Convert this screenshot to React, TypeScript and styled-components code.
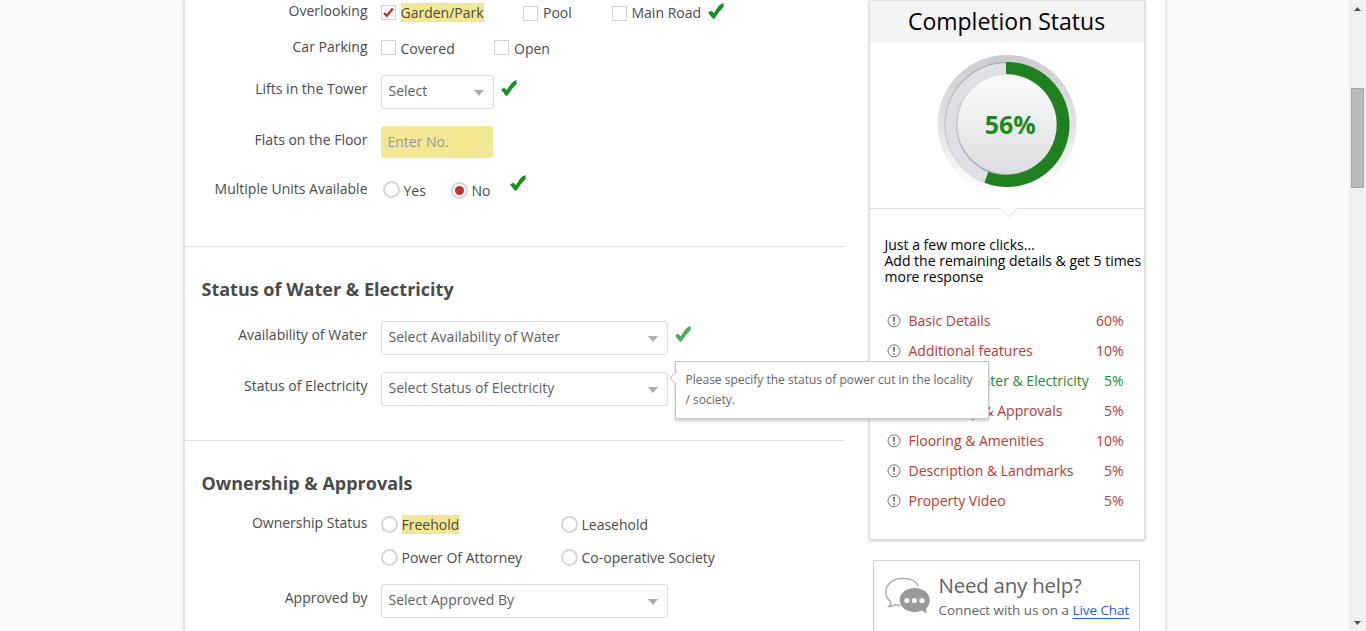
import React from 'react';
import styled, { createGlobalStyle } from 'styled-components';

const GlobalStyle = createGlobalStyle`
  * { box-sizing: border-box; }
  body {
    margin: 0;
    background: #fafafa;
    color: #4b4b4b;
    font: 14px/19px 'Open Sans', 'Noto Sans', sans-serif;
    overflow: hidden;
  }
`;

const Page = styled.div`
  display: flex;
  height: 631px;
  overflow: hidden;
`;

const Viewport = styled.div`
  flex: 1;
  display: flex;
  padding-left: 185px;
`;

const Sheet = styled.main`
  display: flex;
  width: 980px;
  height: 631px;
  background: #fff;
  box-shadow: 0 0 0 2px #e6e6e6, 0 0 4px 1px #e4e4e4;
`;

const Form = styled.div`
  width: 660px;
  flex: none;
`;

const Section = styled.section<{ $first?: boolean; $height: number }>`
  height: ${p => p.$height}px;
  padding-top: ${p => (p.$first ? 0 : 30)}px;
  border-top: ${p => (p.$first ? 'none' : '1px solid #e3e3e3')};
`;

const Heading = styled.h2<{ $gap: number }>`
  margin: 0 0 ${p => p.$gap}px;
  padding-left: 16.5px;
  font-size: 18px;
  line-height: 25px;
  font-weight: 700;
`;

const Row = styled.div<{ $height?: number }>`
  display: flex;
  gap: 13.5px;
  height: ${p => p.$height ?? 51}px;
`;

const Label = styled.div<{ $top?: number }>`
  width: 182.5px;
  flex: none;
  padding-top: ${p => p.$top ?? 4}px;
  text-align: right;
  white-space: nowrap;
`;

const Field = styled.div<{ $top?: number }>`
  position: relative;
  display: flex;
  align-items: flex-start;
  padding-top: ${p => p.$top ?? 0}px;
`;

const Choices = styled.div`
  display: grid;
  grid-template-columns: 180px 180px;
  row-gap: 14px;
`;

const Option = styled.label<{ $width?: number; $gap?: number; $indent?: number }>`
  display: flex;
  align-items: flex-start;
  gap: ${p => p.$gap ?? 5}px;
  width: ${p => (p.$width ? `${p.$width}px` : 'auto')};
  padding-left: ${p => p.$indent ?? 0}px;
  white-space: nowrap;
`;

const OptionText = styled.span<{ $marked?: boolean }>`
  background: ${p => (p.$marked ? '#f2e793' : 'transparent')};
`;

const Box = styled.span<{ $top?: number }>`
  display: flex;
  width: 15px;
  height: 15px;
  margin-top: ${p => p.$top ?? 1}px;
  border: 1px solid #d3d3d3;
  background: #fff;
`;

const Radio = styled.span<{ $top?: number }>`
  display: flex;
  align-items: center;
  justify-content: center;
  width: 17px;
  height: 17px;
  margin-top: ${p => p.$top ?? 1}px;
  border: 2px solid #d6d6d6;
  border-radius: 50%;
`;

const Dot = styled.span`
  width: 9px;
  height: 9px;
  border-radius: 50%;
  background: #c23628;
`;

const Select = styled.div<{ $width: number }>`
  display: flex;
  align-items: flex-start;
  justify-content: space-between;
  width: ${p => p.$width}px;
  height: 34px;
  padding: 5px 9px 0 6.5px;
  border: 1px solid #dcdcdc;
  border-radius: 3px;
  color: #5e5e5e;
`;

const Caret = styled.span`
  margin-top: 9px;
  border: 6px solid transparent;
  border-top-color: #adadad;
  border-bottom: 0;
  border-left-width: 5.5px;
  border-right-width: 5.5px;
`;

const Input = styled.input`
  width: 112px;
  height: 32px;
  padding: 0 6.5px 1px;
  border: 0;
  border-radius: 3px;
  background: #f2e793;
  font: inherit;
  &::placeholder { color: #999; opacity: 1; }
`;

const TickSvg = styled.svg<{ $left: number; $top: number; $faded?: boolean }>`
  flex: none;
  margin: ${p => p.$top}px 0 0 ${p => p.$left}px;
  opacity: ${p => (p.$faded ? 0.75 : 1)};
`;

const Tooltip = styled.div`
  position: absolute;
  z-index: 2;
  left: 294px;
  top: -11px;
  width: 314px;
  height: 58px;
  padding: 8px 9.5px;
  background: #fff;
  border: 1px solid #c6c6c6;
  box-shadow: 0 2px 3px rgba(0, 0, 0, 0.2);
  color: #666;
  font-size: 12px;
  line-height: 20px;
`;

const TooltipArrow = styled.svg`
  position: absolute;
  left: -7px;
  top: 9px;
`;

const Side = styled.aside`
  width: 276px;
  margin-left: 24px;
  flex: none;
`;

const Card = styled.div`
  height: 540px;
  margin-bottom: 20px;
  border: 1px solid #dedede;
  box-shadow: 0 1px 3px rgba(0, 0, 0, 0.24);
`;

const CardTitle = styled.div`
  height: 42px;
  padding-right: 1px;
  background: #f4f4f4;
  color: #000;
  font-size: 23px;
  line-height: 41px;
  text-align: center;
`;

const Gauge = styled.div`
  display: flex;
  justify-content: center;
  height: 165px;
  padding-top: 11px;
`;

const GaugeValue = styled.text`
  font-size: 25px;
  font-weight: 700;
  fill: #1e8a1e;
`;

const Notch = styled.svg`
  display: block;
  height: 10px;
`;

const Intro = styled.p`
  margin: 19px 0 26px;
  padding-left: 14.5px;
  color: #000;
  line-height: 16px;
  white-space: nowrap;
`;

const StatusRow = styled.div<{ $done?: boolean }>`
  display: flex;
  height: 30px;
  padding: 0 20.5px 0 17px;
  color: ${p => (p.$done ? '#1e8a2a' : '#bd3a32')};
  white-space: nowrap;
`;

const StatusName = styled.span`
  flex: 1;
  padding-left: 7.5px;
`;

const StatusIcon = styled.svg`
  flex: none;
  margin-top: 3px;
`;

const Help = styled.div`
  display: flex;
  width: 267px;
  height: 90px;
  margin-left: 4px;
  padding: 12px 0 0 11px;
  border: 1px solid #d2d2d2;
  color: #636466;
`;

const HelpText = styled.div`
  padding-left: 7.5px;
  white-space: nowrap;
`;

const HelpTitle = styled.div`
  font-size: 20.5px;
  line-height: 25px;
  letter-spacing: -0.25px;
`;

const HelpLine = styled.div`
  font-size: 13.5px;
  line-height: 24px;
  letter-spacing: -0.06px;
`;

const ChatLink = styled.a`
  color: #1f5fe0;
  text-decoration: underline;
  text-underline-offset: 3px;
`;

const Scrollbar = styled.div`
  display: flex;
  flex-direction: column;
  align-items: center;
  justify-content: space-between;
  width: 17px;
  background: #f1f1f1;
`;

const Track = styled.div`
  flex: 1;
  padding-top: 71px;
`;

const Thumb = styled.div`
  width: 13px;
  height: 100px;
  border: 1px solid #a8a8a8;
  background: #bcbcbc;
`;

const Arrow = ({ down }: { down?: boolean }) => (
  <svg width="17" height="17" viewBox="0 0 17 17">
    <path d={down ? 'M5 7h7l-3.5 4z' : 'M5 11h7l-3.5-4z'} fill="#505050" />
  </svg>
);

const Tick = ({ left, top, faded }: { left: number; top: number; faded?: boolean }) => (
  <TickSvg $left={left} $top={top} $faded={faded} width="16" height="16" viewBox="0 0 16 16">
    <path d="M0 9.6 3.2 7.8 5.7 10.2 10.3 3.4Q12.6 .8 15.6 .1V4L11 9 6.2 15.8H5Z" fill="#178e20" />
  </TickSvg>
);

const Combo = ({ text, width = 287 }: { text: string; width?: number }) => (
  <Select $width={width}>
    <span>{text}</span>
    <Caret />
  </Select>
);

const StatusGauge = () => (
  <svg width="142" height="142" viewBox="-71 -70.5 142 142">
    <defs>
      <linearGradient id="rim" x1="0" y1="0" x2="0" y2="1">
        <stop offset="0" stopColor="#cbccd0" />
        <stop offset=".5" stopColor="#e2e3e5" />
        <stop offset="1" stopColor="#fff" />
      </linearGradient>
      <linearGradient id="face" x1="0" y1="0" x2="0" y2="1">
        <stop offset="0" stopColor="#fbfcfc" />
        <stop offset="1" stopColor="#dcdde0" />
      </linearGradient>
      <linearGradient id="edge" x1="0" y1="0" x2="0" y2="1">
        <stop offset="0" stopColor="#b2b3b8" />
        <stop offset="1" stopColor="#dfe0e4" />
      </linearGradient>
      <linearGradient id="faceEdge" x1="0" y1="0" x2="0" y2="1">
        <stop offset="0" stopColor="#dfe0e4" />
        <stop offset="1" stopColor="#a4a5aa" />
      </linearGradient>
    </defs>
    <circle r="69.5" fill="url(#rim)" />
    <circle r="62" fill="#dfe0e4" stroke="url(#edge)" strokeWidth="1.5" />
    <circle r="50.3" fill="url(#face)" stroke="url(#faceEdge)" strokeWidth="1.4" />
    <path d="M-1-62.5A62.5 62.5 0 1 1-22.5 58.3L-18.7 47.2A50.5 50.5 0 1 0-1-50.5Z" fill="#1f801f" />
    <GaugeValue x="3.2" y="9.2" textAnchor="middle">56%</GaugeValue>
  </svg>
);

const statuses = [
  { name: 'Basic Details', value: '60%' },
  { name: 'Additional features', value: '10%' },
  { name: 'Status of Water & Electricity', value: '5%', done: true },
  { name: 'Ownership & Approvals', value: '5%' },
  { name: 'Flooring & Amenities', value: '10%' },
  { name: 'Description & Landmarks', value: '5%' },
  { name: 'Property Video', value: '5%' },
];

const ownership = ['Freehold', 'Leasehold', 'Power Of Attorney', 'Co-operative Society'];

export default function App() {
  return (
    <>
      <GlobalStyle />
      <Page>
        <Viewport>
          <Sheet>
            <Form>
              <Section $first $height={246}>
                <Row $height={36}>
                  <Label $top={1}>Overlooking</Label>
                  <Field $top={3}>
                    <Option $width={142} $gap={4.5}>
                      <Box $top={2}>
                        <svg width="13" height="13" viewBox="0 0 13 13">
                          <path d="M2 7 4.800 9.800 10.800 2.500" fill="none" stroke="#c6281c" strokeWidth="2.200" />
                        </svg>
                      </Box>
                      <OptionText $marked>Garden/Park</OptionText>
                    </Option>
                    <Option $width={89}><Box $top={3} />Pool</Option>
                    <Option $gap={4.5}><Box $top={3} />Main Road</Option>
                    <Tick left={6.5} top={0} />
                  </Field>
                </Row>
                <Row $height={39}>
                  <Label $top={1}>Car Parking</Label>
                  <Field $top={3}>
                    <Option $width={113} $gap={4.5}><Box />Covered</Option>
                    <Option><Box />Open</Option>
                  </Field>
                </Row>
                <Row>
                  <Label>Lifts in the Tower</Label>
                  <Field>
                    <Combo text="Select" width={113} />
                    <Tick left={7} top={5} />
                  </Field>
                </Row>
                <Row $height={50}>
                  <Label>Flats on the Floor</Label>
                  <Field><Input placeholder="Enter No." /></Field>
                </Row>
                <Row>
                  <Label $top={3}>Multiple Units Available</Label>
                  <Field $top={5}>
                    <Option $width={70} $gap={3.5} $indent={2}><Radio $top={0} />Yes</Option>
                    <Option $gap={3.5}><Radio><Dot /></Radio>No</Option>
                    <Tick left={19.5} top={-6} />
                  </Field>
                </Row>
              </Section>

              <Section $height={194}>
                <Heading $gap={19}>Status of Water &amp; Electricity</Heading>
                <Row>
                  <Label>Availability of Water</Label>
                  <Field>
                    <Combo text="Select Availability of Water" />
                    <Tick left={7} top={5} faded />
                  </Field>
                </Row>
                <Row>
                  <Label>Status of Electricity</Label>
                  <Field>
                    <Combo text="Select Status of Electricity" />
                    <Tooltip>
                      <TooltipArrow width="8" height="14" viewBox="0 0 8 14">
                        <path d="M8 .5 1 7l7 6.5" fill="#fff" stroke="#c6c6c6" />
                      </TooltipArrow>
                      Please specify the status of power cut in the locality / society.
                    </Tooltip>
                  </Field>
                </Row>
              </Section>

              <Section $height={191}>
                <Heading $gap={15}>Ownership &amp; Approvals</Heading>
                <Row $height={73}>
                  <Label $top={2}>Ownership Status</Label>
                  <Field $top={4}>
                    <Choices>
                      {ownership.map((name, i) => (
                        <Option key={name} $gap={3.5}>
                          <Radio />
                          <OptionText $marked={i === 0}>{name}</OptionText>
                        </Option>
                      ))}
                    </Choices>
                  </Field>
                </Row>
                <Row $height={47}>
                  <Label>Approved by</Label>
                  <Field><Combo text="Select Approved By" /></Field>
                </Row>
              </Section>
            </Form>

            <Side>
              <Card>
                <CardTitle>Completion Status</CardTitle>
                <Gauge><StatusGauge /></Gauge>
                <Notch width="275" height="10" viewBox="0 0 275 10">
                  <path d="M0 .5H130L138.5 9 147 .5H275" fill="none" stroke="#dedede" />
                </Notch>
                <Intro>
                  Just a few more clicks...<br />
                  Add the remaining details &amp; get 5 times<br />
                  more response
                </Intro>
                {statuses.map(s => (
                  <StatusRow key={s.name} $done={s.done}>
                    <StatusIcon width="14" height="14" viewBox="0 0 14 14">
                      <circle cx="7" cy="6.8" r="6" fill="none" stroke="#777" />
                      <path d="M6 3H8L7.6 8H6.4ZM6.2 9.2H7.8V10.7H6.2Z" fill="#666" />
                    </StatusIcon>
                    <StatusName>{s.name}</StatusName>
                    <span>{s.value}</span>
                  </StatusRow>
                ))}
              </Card>
              <Help>
                <svg width="46" height="42" viewBox="0 0 46 42">
                  <path
                    d="M33.5 13C31 8 25 5.3 18 5.3 8 5.3 .8 11 .8 19c0 4 2 7.5 5 10 .3 2-.5 3.3-2 4.700 3-.2 5-1 6.500-2 2 .6 3.500.8 5 .9"
                    fill="none" stroke="#a6a6a6" strokeWidth="1.3"
                  />
                  <path
                    d="M29.7 15C21.200 15 14.700 20.200 14.700 27s6.500 12 15 12c3 0 5.500-.6 7.500-1.500 1.500 1.300 3 2.200 5 2.500-.8-1.300-1.200-2.600-1-4.500 2.300-2.200 3.500-5 3.500-8.500 0-6.800-6.500-12-15-12Z"
                    fill="#9a9a9a"
                  />
                  <circle cx="21.9" cy="27.5" r="2.600" fill="#fff" />
                  <circle cx="29.4" cy="27.5" r="2.600" fill="#fff" />
                  <circle cx="36.9" cy="27.5" r="2.600" fill="#fff" />
                </svg>
                <HelpText>
                  <HelpTitle>Need any help?</HelpTitle>
                  <HelpLine>Connect with us on a <ChatLink>Live Chat</ChatLink></HelpLine>
                </HelpText>
              </Help>
            </Side>
          </Sheet>
        </Viewport>
        <Scrollbar>
          <Arrow />
          <Track><Thumb /></Track>
          <Arrow down />
        </Scrollbar>
      </Page>
    </>
  );
}
